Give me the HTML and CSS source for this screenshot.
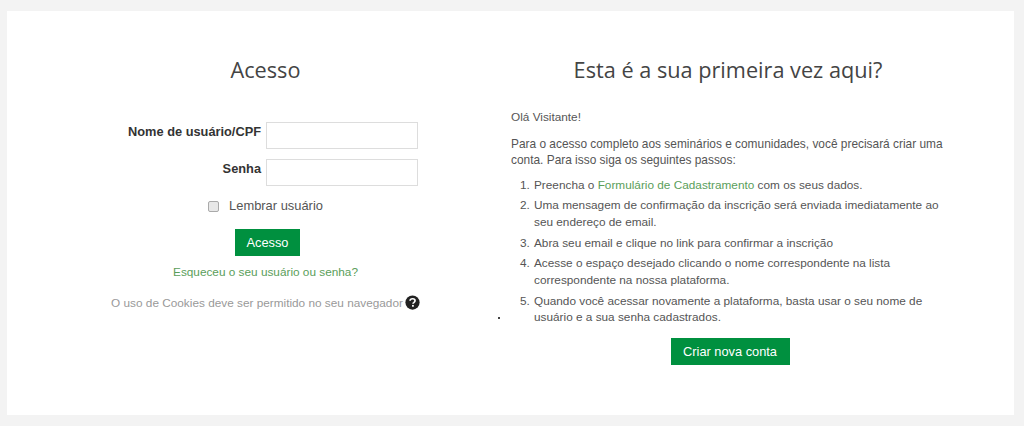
FILE: index.html
```html
<!DOCTYPE html>
<html lang="pt-BR">
<head>
<meta charset="utf-8">
<title>Acesso</title>
<link rel="stylesheet" href="styles.css">
</head>
<body>
<main class="card">
  <section class="login">
    <h2 class="title">Acesso</h2>
    <form class="form">
      <div class="field">
        <label class="label" for="user">Nome de usuário/CPF</label>
        <input class="input" id="user" type="text">
      </div>
      <div class="field">
        <label class="label" for="pass">Senha</label>
        <input class="input" id="pass" type="password">
      </div>
      <div class="remember">
        <span class="check"></span>
        <span>Lembrar usuário</span>
      </div>
      <a class="btn btn-login" href="#">Acesso</a>
      <a class="link forgot" href="#">Esqueceu o seu usuário ou senha?</a>
      <p class="cookies">O uso de Cookies deve ser permitido no seu navegador
        <svg class="help" viewBox="0 0 16 16" aria-hidden="true">
          <circle cx="8" cy="8" r="7.6" fill="#222"/>
          <path d="M5.4 6.2C5.5 4.7 6.6 4 8.1 4c1.5 0 2.6.9 2.6 2.1 0 1-.6 1.5-1.3 2-.6.4-.8.7-.8 1.3" fill="none" stroke="#fff" stroke-width="1.8"/>
          <rect x="7.5" y="10.6" width="1.9" height="1.9" fill="#fff"/>
        </svg>
      </p>
    </form>
  </section>
  <section class="signup">
    <span class="dot"></span>
    <h2 class="title">Esta é a sua primeira vez aqui?</h2>
    <p class="hello">Olá Visitante!</p>
    <p class="intro">Para o acesso completo aos seminários e comunidades, você precisará criar uma conta. Para isso siga os seguintes passos:</p>
    <ol class="steps">
      <li>Preencha o <a class="link" href="#">Formulário de Cadastramento</a> com os seus dados.</li>
      <li>Uma mensagem de confirmação da inscrição será enviada imediatamente ao seu endereço de email.</li>
      <li>Abra seu email e clique no link para confirmar a inscrição</li>
      <li>Acesse o espaço desejado clicando o nome correspondente na lista correspondente na nossa plataforma.</li>
      <li>Quando você acessar novamente a plataforma, basta usar o seu nome de usuário e a sua senha cadastrados.</li>
    </ol>
    <div class="actions"><a class="btn btn-signup" href="#">Criar nova conta</a></div>
  </section>
</main>
</body>
</html>
```
FILE: styles.css
```css
* { box-sizing: border-box; }
html, body { height: 100%; }
body {
  margin: 0;
  padding: 11px 10px 11px 7px;
  background: #f3f3f3;
  font-family: "Liberation Sans", Arial, sans-serif;
  font-size: 11.8px;
  line-height: 16.5px;
  color: #555;
  overflow: hidden;
}
.card {
  height: 404px;
  background: #fff;
  display: grid;
  grid-template-columns: 487px 438px;
  padding: 0 0 0 15px;
  gap: 2px;
}
.title {
  margin: 0;
  font-family: "Open Sans", sans-serif;
  font-weight: 400;
  font-size: 21.7px;
  line-height: 30px;
  color: #444;
  text-align: center;
}
.login { padding-top: 44px; }
.form { display: flex; flex-direction: column; align-items: center; }
.field {
  display: flex;
  justify-content: flex-end;
  gap: 5px;
  width: 305px;
  margin-bottom: 10px;
}
.form .field:first-child { margin-top: 37px; }
.label {
  font-size: 12.8px;
  font-weight: 700;
  color: #333;
  line-height: 14px;
  padding-top: 3px;
  white-space: nowrap;
}
.input {
  width: 152px;
  height: 27px;
  border: 1px solid #ddd;
  background: #fff;
  margin: 0;
  flex: none;
}
.remember {
  display: flex;
  align-items: center;
  gap: 10px;
  height: 18px;
  margin-top: 1px;
  margin-bottom: 14px;
  font-size: 12.9px;
}
.check {
  width: 11px;
  height: 11px;
  border: 1px solid #aaa;
  border-radius: 2px;
  background: #e8e8e8;
}
.btn {
  display: block;
  background: #00903f;
  color: #fff;
  text-decoration: none;
  text-align: center;
  font-size: 12.8px;
  height: 27px;
  line-height: 27px;
}
.btn-login { width: 65px; margin-left: 4px; margin-bottom: 8px; }
.btn-signup { width: 119px; }
.link { color: #5a9e5a; text-decoration: none; }
.forgot { margin-bottom: 14px; }
.cookies {
  margin: 0;
  display: flex;
  align-items: center;
  gap: 2px;
  color: #999;
}
.help { width: 15px; height: 15px; }
.signup { padding: 44px 4px 0 0; position: relative; }
.dot {
  position: absolute;
  left: -13px;
  top: 306px;
  width: 1.5px;
  height: 1.5px;
  background: #444;
}
.hello { margin: 24px 0 10px; }
.intro { margin: 0 0 8px; font-size: 11.9px; }
.steps { margin: 0; padding: 0 0 0 22px; }
.steps li { margin-bottom: 4.25px; padding-left: 1px; }
.actions { display: flex; justify-content: center; padding: 8px 0 0 4px; }
```
